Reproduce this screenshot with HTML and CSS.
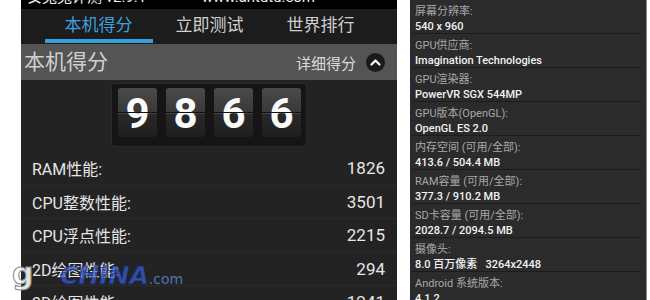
FILE: index.html
```html
<!DOCTYPE html>
<html>
<head>
<meta charset="utf-8">
<link rel="stylesheet" href="styles.css">
</head>
<body>
<div class="page">
  <div class="left">
    <div class="status">
      <span class="status-l">安兔兔评测 v2.9.1</span>
      <span class="status-r">www.antutu.com</span>
    </div>
    <div class="tabs">
      <div class="tab active"><span class="tab-text">本机得分</span><span class="tab-line"></span></div>
      <div class="tab"><span class="tab-text">立即测试</span><span class="tab-line"></span></div>
      <div class="tab"><span class="tab-text">世界排行</span><span class="tab-line"></span></div>
    </div>
    <div class="header">
      <span class="header-title">本机得分</span>
      <span class="header-right">
        <span class="detail">详细得分</span>
        <span class="circle">
          <svg width="19" height="19" viewBox="0 0 19 19"><path d="M5.5 11.5 L9.5 7.5 L13.5 11.5" fill="none" stroke="#fff" stroke-width="2.2" stroke-linecap="round" stroke-linejoin="round"/></svg>
        </span>
      </span>
    </div>
    <div class="body">
      <div class="flip">
        <div class="tile"><span class="digit">9</span></div>
        <div class="tile"><span class="digit">8</span></div>
        <div class="tile"><span class="digit">6</span></div>
        <div class="tile"><span class="digit">6</span></div>
      </div>
      <div class="rows">
        <div class="row"><span>RAM性能:</span><span class="val">1826</span></div>
        <div class="row"><span>CPU整数性能:</span><span class="val">3501</span></div>
        <div class="row"><span>CPU浮点性能:</span><span class="val">2215</span></div>
        <div class="row"><span>2D绘图性能:</span><span class="val">294</span></div>
        <div class="row"><span>3D绘图性能:</span><span class="val">1241</span></div>
      </div>
    </div>
  </div>
  <div class="right">
    <div class="item"><div class="lbl">屏幕分辨率:</div><div class="v">540 x 960</div></div>
    <div class="item"><div class="lbl">GPU供应商:</div><div class="v">Imagination Technologies</div></div>
    <div class="item"><div class="lbl">GPU渲染器:</div><div class="v">PowerVR SGX 544MP</div></div>
    <div class="item"><div class="lbl">GPU版本(OpenGL):</div><div class="v">OpenGL ES 2.0</div></div>
    <div class="item"><div class="lbl">内存空间 (可用/全部):</div><div class="v">413.6 / 504.4 MB</div></div>
    <div class="item"><div class="lbl">RAM容量 (可用/全部):</div><div class="v">377.3 / 910.2 MB</div></div>
    <div class="item"><div class="lbl">SD卡容量 (可用/全部):</div><div class="v">2028.7 / 2094.5 MB</div></div>
    <div class="item"><div class="lbl">摄像头:</div><div class="v">8.0 百万像素&nbsp;&nbsp;&nbsp;3264x2448</div></div>
    <div class="item"><div class="lbl">Android 系统版本:</div><div class="v">4.1.2</div></div>
  </div>
  <div class="watermark">
    <span class="wm-g">g</span><span class="wm-china">CHINA</span><span class="wm-com">.com</span>
  </div>
</div>
</body>
</html>
```

FILE: styles.css
```css
html, body {
  margin: 0;
  padding: 0;
  background: #fff;
}
body {
  font-family: Roboto, "Noto Sans CJK SC", sans-serif;
  width: 650px;
  height: 300px;
  overflow: hidden;
}
.page {
  position: relative;
  display: flex;
  width: 650px;
  height: 300px;
  overflow: hidden;
}
.left {
  margin-left: 21px;
  width: 376px;
  height: 300px;
  background: #232323;
  display: flex;
  flex-direction: column;
  flex-shrink: 0;
  overflow: hidden;
}
.status {
  height: 9px;
  flex-shrink: 0;
  background: #000;
  overflow: hidden;
  display: flex;
  justify-content: space-between;
  color: #eee;
  font-size: 15px;
  line-height: 15px;
  padding: 0 82px 0 6px;
}
.status span {
  margin-top: -10px;
}
.tabs {
  height: 35px;
  flex-shrink: 0;
  background: #1c1c1c;
  display: flex;
  padding-left: 22px;
}
.tab {
  width: 111px;
  display: flex;
  flex-direction: column;
  align-items: center;
}
.tab-text {
  font-size: 17px;
  line-height: 20px;
  margin-top: 6px;
  color: #cfcfcf;
}
.tab-line {
  margin-top: 4px;
  width: 108px;
  height: 4px;
}
.tab.active .tab-text {
  color: #3f9fdc;
}
.tab.active .tab-line {
  background: #33a0db;
}
.header {
  height: 36px;
  flex-shrink: 0;
  box-sizing: border-box;
  background: #545454;
  display: flex;
  align-items: center;
  justify-content: space-between;
  padding: 0 12px 0 3px;
}
.header-title {
  font-size: 21px;
  color: #d0d0d0;
  line-height: 24px;
}
.header-right {
  display: flex;
  align-items: center;
  gap: 10px;
}
.detail {
  font-size: 15px;
  color: #dcdcdc;
}
.circle {
  width: 19px;
  height: 19px;
  border-radius: 50%;
  background: #1a1a1a;
  display: flex;
}
.body {
  flex: 1;
  display: flex;
  flex-direction: column;
}
.flip {
  align-self: center;
  flex-shrink: 0;
  margin-top: 4px;
  display: flex;
  gap: 9px;
  padding: 4px 5px 9px 6px;
  background: #151515;
  border-radius: 3px;
  box-shadow: 0 0 0 1px #2a2a2a;
}
.tile {
  position: relative;
  width: 39px;
  height: 49px;
  border-radius: 3px;
  background: linear-gradient(#4a4a4a, #383838 50%, #2a2a2a 50%, #1e1e1e);
  display: flex;
  align-items: center;
  justify-content: center;
  overflow: hidden;
}
.tile::after {
  content: "";
  position: absolute;
  left: 0;
  right: 0;
  top: 24px;
  height: 1px;
  background: #111;
  box-shadow: 0 1px 0 rgba(255,255,255,0.12);
}
.digit {
  font-family: Roboto, sans-serif;
  font-weight: 700;
  font-size: 42px;
  line-height: 42px;
  color: #fafafa;
  margin-top: 2px;
}
.rows {
  margin-top: 6px;
  display: flex;
  flex-direction: column;
  flex-shrink: 0;
}
.row {
  height: 33.5px;
  flex-shrink: 0;
  box-sizing: border-box;
  display: flex;
  align-items: center;
  justify-content: space-between;
  padding: 0 12px 0 11px;
  font-size: 16px;
  color: #e6e6e6;
  border-bottom: 1px solid #2b2b2b;
}
.row .val {
  font-size: 17px;
}
.right {
  margin-left: 13px;
  width: 236px;
  height: 300px;
  background: #2b2b2b;
  border-right: 1px solid #8a8a8a;
  flex-shrink: 0;
  display: flex;
  flex-direction: column;
  overflow: hidden;
}
.item {
  height: 34px;
  flex-shrink: 0;
  box-sizing: border-box;
  margin: 0 5px 0 2px;
  padding: 4px 0 0 3px;
  border-bottom: 1px solid #1c1c1c;
}
.lbl {
  font-size: 11px;
  line-height: 15px;
  color: #a8a8a8;
}
.v {
  font-size: 11px;
  line-height: 15px;
  color: #f2f2f2;
  font-weight: 500;
}
.watermark {
  position: absolute;
  left: 12px;
  top: 256px;
  display: flex;
  align-items: baseline;
  font-family: "DejaVu Sans", sans-serif;
  font-weight: 700;
}
.wm-g {
  font-size: 30px;
  color: rgba(255,255,255,0.9);
  -webkit-text-stroke: 1px #888;
  width: 48px;
}
.wm-china {
  font-size: 25px;
  font-style: italic;
  color: rgba(60,100,210,0.7);
  -webkit-text-stroke: 1px rgba(20,40,120,0.8);
  letter-spacing: 0;
}
.wm-com {
  font-size: 14px;
  font-weight: 400;
  color: rgba(90,140,220,0.8);
}
```
